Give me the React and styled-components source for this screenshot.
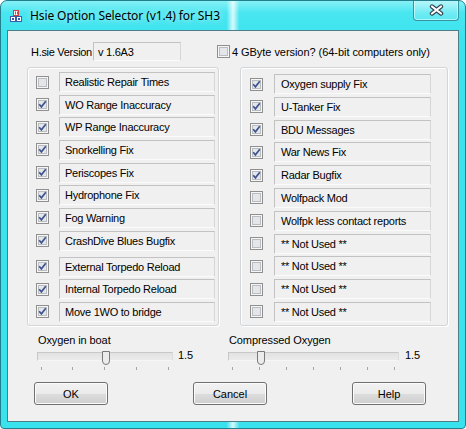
import React from 'react';
import styled, { createGlobalStyle } from 'styled-components';

const GlobalStyle = createGlobalStyle`
  html, body {
    margin: 0;
    padding: 0;
    background: #ffffff;
  }

  body {
    font-family: "Liberation Sans", Arial, sans-serif;
    font-size: 11px;
    color: #000;
  }
`;

const leftOptions = [
  { label: 'Realistic Repair Times', checked: false },
  { label: 'WO Range Inaccuracy', checked: true },
  { label: 'WP Range Inaccuracy', checked: true },
  { label: 'Snorkelling Fix', checked: true },
  { label: 'Periscopes Fix', checked: true },
  { label: 'Hydrophone Fix', checked: true },
  { label: 'Fog Warning', checked: true },
  { label: 'CrashDive Blues Bugfix', checked: true },
  { label: 'External Torpedo Reload', checked: true, spaced: true },
  { label: 'Internal Torpedo Reload', checked: true },
  { label: 'Move 1WO to bridge', checked: true },
];

const rightOptions = [
  { label: 'Oxygen supply Fix', checked: true },
  { label: 'U-Tanker Fix', checked: true },
  { label: 'BDU Messages', checked: true },
  { label: 'War News Fix', checked: true },
  { label: 'Radar Bugfix', checked: true },
  { label: 'Wolfpack Mod', checked: false },
  { label: 'Wolfpk less contact reports', checked: false },
  { label: '** Not Used **', checked: false },
  { label: '** Not Used **', checked: false },
  { label: '** Not Used **', checked: false },
  { label: '** Not Used **', checked: false },
];

const Window = styled.div`
  width: 466px;
  height: 429px;
  box-sizing: border-box;
  border: 1px solid #22808c;
  border-radius: 7px 7px 4px 4px;
  overflow: hidden;
  display: flex;
  flex-direction: column;
  background:
    linear-gradient(90deg, rgba(255, 255, 255, 0) 48.6%, rgba(255, 255, 255, 0.8) 50%, rgba(255, 255, 255, 0) 51.4%),
    linear-gradient(180deg, #86f0f6 0px, #48e6f0 12px, #3ae3ee 40px, #3ae2ed 100%);
`;

const TitleBar = styled.div`
  height: 29px;
  display: flex;
  align-items: center;
  padding-left: 9px;
`;

const TitleIcon = styled.svg`
  width: 12px;
  height: 12px;
  display: block;
  flex-shrink: 0;
`;

const TitleText = styled.span`
  margin-left: 8px;
  font-family: "Noto Sans", "Open Sans", sans-serif;
  font-size: 12px;
  letter-spacing: -0.1px;
  color: #000;
  text-shadow: 0 0 6px rgba(255, 255, 255, 0.9);
`;

const CloseButton = styled.div`
  margin-left: auto;
  margin-right: 6px;
  align-self: flex-start;
  margin-top: -1px;
  width: 44px;
  height: 20px;
  border: 1px solid #3596a2;
  border-top: none;
  border-radius: 0 0 4px 4px;
  background: linear-gradient(180deg, rgba(255, 255, 255, 0.4), rgba(255, 255, 255, 0.12));
  box-shadow: inset 0 0 0 1px rgba(255, 255, 255, 0.5);
  display: flex;
  align-items: center;
  justify-content: center;
`;

const Client = styled.div`
  flex: 1;
  margin: 0 6px 6px 6px;
  border: 1px solid #4f7d87;
  background: #f0f0f0;
  display: flex;
  flex-direction: column;
`;

const VersionRow = styled.div`
  margin-top: 11px;
  height: 19px;
  display: flex;
  align-items: center;
`;

const VersionLabel = styled.span`
  margin-left: 23px;
  width: 62px;
  flex-shrink: 0;
  white-space: nowrap;
  letter-spacing: -0.3px;
`;

const SunkenBox = styled.div`
  box-sizing: border-box;
  height: ${(p) => p.$h || 20}px;
  width: ${(p) => p.$w}px;
  border: 1px solid;
  border-color: #c2c2c2 #d6d6d6 #fbfbfb #c2c2c2;
  background: #f0f0f0;
  padding-left: ${(p) => p.$pad || 5}px;
  display: flex;
  align-items: center;
  white-space: nowrap;
  letter-spacing: -0.25px;
  flex-shrink: 0;
`;

const WideCheck = styled.label`
  margin-left: 36px;
  display: flex;
  align-items: center;
  gap: 2px;
  white-space: nowrap;
  letter-spacing: -0.05px;
`;

const Groups = styled.div`
  margin-top: 6px;
  display: flex;
`;

const Group = styled.div`
  box-sizing: border-box;
  width: ${(p) => p.$w}px;
  height: 259px;
  margin-left: ${(p) => p.$ml}px;
  border: 1px solid #d2d6d9;
  border-radius: 3px;
  box-shadow: inset 1px 1px 0 #ffffff, 1px 1px 0 #ffffff;
  padding-top: ${(p) => p.$pt}px;
  padding-left: ${(p) => p.$pl}px;
  display: flex;
  flex-direction: column;
  gap: ${(p) => p.$gap}px;
`;

const OptionRow = styled.div`
  display: flex;
  align-items: center;
  height: 20px;
  margin-top: ${(p) => (p.$spaced ? 3.4 : 0)}px;
`;

const CheckSvg = styled.svg`
  width: 13px;
  height: 13px;
  display: block;
  flex-shrink: 0;
  margin-right: ${(p) => p.$mr || 0}px;
`;

const Sliders = styled.div`
  margin-top: 8px;
  display: flex;
`;

const SliderBlock = styled.div`
  width: ${(p) => p.$w}px;
  padding-left: ${(p) => p.$pl}px;
  box-sizing: border-box;
  display: flex;
  flex-direction: column;
`;

const SliderLabel = styled.div`
  height: 13px;
  line-height: 13px;
  padding-left: 1px;
  letter-spacing: -0.1px;
`;

const TrackRow = styled.div`
  margin-top: 5px;
  display: flex;
  align-items: center;
  height: 9px;
`;

const Track = styled.div`
  position: relative;
  box-sizing: border-box;
  width: ${(p) => p.$w}px;
  height: 9px;
  border: 1px solid;
  border-color: #c8c8c8 #dcdcdc #f6f6f6 #c8c8c8;
  background: linear-gradient(180deg, #e2e2e2, #ebebeb);
`;

const Thumb = styled.svg`
  position: absolute;
  top: -2px;
  width: 8px;
  height: 14px;
  display: block;
`;

const SliderValue = styled.span`
  margin-left: ${(p) => p.$ml}px;
  margin-top: -3px;
  letter-spacing: -0.1px;
`;

const Ticks = styled.div`
  position: relative;
  margin-top: 6px;
  height: 3px;
`;

const Tick = styled.span`
  position: absolute;
  top: 0;
  width: 1px;
  height: 3px;
  background: #a4a4a4;
`;

const Buttons = styled.div`
  margin-top: 12px;
  padding-left: 26px;
  display: flex;
  gap: 85px;
`;

const Button = styled.button`
  box-sizing: border-box;
  width: 74px;
  height: 23px;
  padding: 0;
  border: 1px solid #707070;
  border-radius: 3px;
  background: linear-gradient(180deg, #f2f2f2 0%, #ebebeb 50%, #dddddd 50%, #cfcfcf 100%);
  box-shadow: inset 0 0 0 1px #fbfbfb;
  font-family: "Liberation Sans", Arial, sans-serif;
  font-size: 11px;
  color: #000;
`;

const CheckBox = ({ checked, mr }) => (
  <CheckSvg viewBox="0 0 13 13" $mr={mr}>
    <rect x="0.5" y="0.5" width="12" height="12" fill="#f6f6f6" stroke="#8f8f8f" />
    <rect x="2.5" y="2.5" width="8" height="8" fill="#e4e6e9" stroke="#b9bdc2" />
    {checked && (
      <path d="M3.2 6.3 L5.4 8.8 L9.8 3.2" fill="none" stroke="#3e5490" strokeWidth="1.7" />
    )}
  </CheckSvg>
);

const Slider = ({ label, width, ticks, pos, blockWidth, pl, valueGap }) => {
  const inset = 4.5;
  const step = (width - inset * 2) / (ticks - 1);
  return (
    <SliderBlock $w={blockWidth} $pl={pl}>
      <SliderLabel>{label}</SliderLabel>
      <TrackRow>
        <Track $w={width}>
          <Thumb viewBox="0 0 8 14" style={{ left: inset + step * pos - 4 }}>
            <path
              d="M0.5 0.5 H7.5 V10 Q7.5 13.5 4 13.5 Q0.5 13.5 0.5 10 Z"
              fill="#ececec"
              stroke="#7a7a7a"
            />
          </Thumb>
        </Track>
        <SliderValue $ml={valueGap}>1.5</SliderValue>
      </TrackRow>
      <Ticks>
        {Array.from({ length: ticks }).map((_, i) => (
          <Tick key={i} style={{ left: Math.round(inset + step * i) - 1 }} />
        ))}
      </Ticks>
    </SliderBlock>
  );
};

const App = () => (
  <Window>
    <GlobalStyle />
    <TitleBar>
      <TitleIcon viewBox="0 0 12 12">
        <rect x="3.5" y="0.5" width="5" height="5" fill="#fff" stroke="#d04040" />
        <rect x="5" y="1.5" width="1" height="3" fill="#d04040" />
        <rect x="7" y="1.5" width="1" height="3" fill="#d04040" />
        <rect x="0.5" y="6.5" width="5" height="5" fill="#fff" stroke="#3c5ca8" />
        <rect x="6.5" y="6.5" width="5" height="5" fill="#fff" stroke="#3c5ca8" />
        <rect x="2" y="8" width="2" height="2" fill="#3c5ca8" />
        <rect x="8" y="8" width="2" height="2" fill="#3c5ca8" />
      </TitleIcon>
      <TitleText>Hsie Option Selector (v1.4) for SH3</TitleText>
      <CloseButton>
        <svg width="15" height="12" viewBox="0 0 15 12">
          <path d="M3 2.5 L12 9.5 M12 2.5 L3 9.5" stroke="#34444f" strokeWidth="4.4" strokeLinecap="round" />
          <path d="M3 2.5 L12 9.5 M12 2.5 L3 9.5" stroke="#ffffff" strokeWidth="2.2" strokeLinecap="round" />
        </svg>
      </CloseButton>
    </TitleBar>
    <Client>
      <VersionRow>
        <VersionLabel>H.sie Version</VersionLabel>
        <SunkenBox $w={88} $h={19} $pad={4}>v 1.6A3</SunkenBox>
        <WideCheck>
          <CheckBox checked={false} />
          4 GByte version? (64-bit computers only)
        </WideCheck>
      </VersionRow>
      <Groups>
        <Group $w={192} $ml={19} $pt={4} $pl={8} $gap={2.67}>
          {leftOptions.map((o, i) => (
            <OptionRow key={i} $spaced={o.spaced}>
              <CheckBox checked={o.checked} mr={10} />
              <SunkenBox $w={156}>{o.label}</SunkenBox>
            </OptionRow>
          ))}
        </Group>
        <Group $w={208} $ml={21} $pt={6} $pl={9} $gap={2.8}>
          {rightOptions.map((o, i) => (
            <OptionRow key={i}>
              <CheckBox checked={o.checked} mr={11} />
              <SunkenBox $w={157} $pad={6}>{o.label}</SunkenBox>
            </OptionRow>
          ))}
        </Group>
      </Groups>
      <Sliders>
        <Slider label="Oxygen in boat" width={136} ticks={5} pos={2} blockWidth={220} pl={29} valueGap={5} />
        <Slider label="Compressed Oxygen" width={171} ticks={7} pos={1} blockWidth={230} pl={0} valueGap={6} />
      </Sliders>
      <Buttons>
        <Button>OK</Button>
        <Button>Cancel</Button>
        <Button>Help</Button>
      </Buttons>
    </Client>
  </Window>
);

export default App;
